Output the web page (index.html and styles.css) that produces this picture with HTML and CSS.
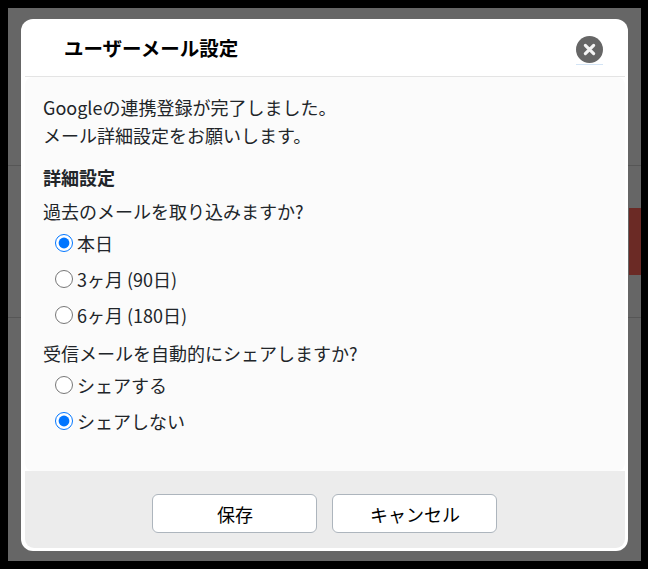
FILE: index.html
```html
<!DOCTYPE html>
<html lang="ja">
<head>
    <meta charset="UTF-8">
    <meta name="viewport" content="width=device-width, initial-scale=1.0">
    <title>ユーザーメール設定</title>
    <link rel="stylesheet" href="styles.css">
</head>
<body>
    <div class="page">
        <div class="bg-row bg-row-first"></div>
        <div class="bg-row bg-row-second">
            <div class="bg-alert"></div>
        </div>

        <div class="modal">
            <div class="modal-header">
                <h2>ユーザーメール設定</h2>
                <button type="button" class="close-btn" aria-label="閉じる">
                    <svg viewBox="0 0 26 26" xmlns="http://www.w3.org/2000/svg">
                        <circle cx="13" cy="13" r="13" />
                        <path d="M9 9l8 8M17 9l-8 8" />
                    </svg>
                </button>
            </div>
            <div class="modal-body">
                <p>Googleの連携登録が完了しました。<br>メール詳細設定をお願いします。</p>
                <h3>詳細設定</h3>
                <p class="question">過去のメールを取り込みますか?</p>
                <label class="radio-row"><input type="radio" name="period" checked>本日</label>
                <label class="radio-row"><input type="radio" name="period">3ヶ月 (90日)</label>
                <label class="radio-row"><input type="radio" name="period">6ヶ月 (180日)</label>
                <p class="question">受信メールを自動的にシェアしますか?</p>
                <label class="radio-row"><input type="radio" name="share">シェアする</label>
                <label class="radio-row"><input type="radio" name="share" checked>シェアしない</label>
            </div>
            <div class="modal-footer">
                <button type="button" class="btn">保存</button>
                <button type="button" class="btn">キャンセル</button>
            </div>
        </div>
    </div>
</body>
</html>
```

FILE: styles.css
```css
* {
    margin: 0;
    padding: 0;
    box-sizing: border-box;
}
html {
    background-color: #000;
}
body {
    margin: 8px 7px 8px 8px;
    font-family: "Noto Sans CJK JP", "Noto Sans", sans-serif;
    color: #212529;
}
.page {
    position: relative;
    height: 553px;
    background-color: #666;
    overflow: hidden;
}
.bg-row {
    border-bottom: 1px solid #565656;
}
.bg-row-first {
    height: 158px;
}
.bg-row-second {
    height: 152px;
    padding-top: 42px;
}
.bg-alert {
    width: 12px;
    height: 67px;
    margin-left: auto;
    background-color: #6b2a25;
}
.modal {
    position: absolute;
    top: 11px;
    left: 13px;
    width: 607px;
    height: 532px;
    display: flex;
    flex-direction: column;
    padding: 0 3px 3px 4px;
    background-color: #fff;
    border-radius: 12px;
}
.modal-header {
    display: flex;
    align-items: center;
    justify-content: space-between;
    height: 58px;
    padding: 0 22px 0 39px;
    border-bottom: 1px solid #e4e4e4;
}
.modal-header h2 {
    font-size: 19.5px;
    font-weight: 700;
    color: #000;
}
.close-btn {
    width: 27px;
    height: 29px;
    margin-top: 6px;
    padding-bottom: 1px;
    background: none;
    border: none;
    border-bottom: 1px solid #d3e4f5;
}
.close-btn svg {
    display: block;
    width: 27px;
    height: 27px;
    filter: blur(0.4px);
}
.close-btn circle {
    fill: #666;
}
.close-btn path {
    stroke: #f4f4f4;
    stroke-width: 3;
    stroke-linecap: round;
    fill: none;
}
.modal-body {
    flex: 1;
    padding: 16px 18px 0;
    font-size: 18px;
    line-height: 28px;
    background-color: #fbfbfb;
    border-radius: 8px;
}
.modal-body h3 {
    margin-top: 14px;
    font-size: 18px;
    font-weight: 700;
    line-height: 28px;
}
.question {
    margin-top: 6px;
}
.radio-row {
    display: flex;
    align-items: center;
    height: 36px;
    padding-left: 12px;
}
.radio-row input {
    width: 18px;
    height: 18px;
    margin: 0 4px 0 0;
}
.modal-footer {
    display: flex;
    justify-content: center;
    align-items: flex-start;
    gap: 15px;
    height: 77px;
    padding: 23px 2px 0 0;
    background-color: #ececec;
    border-radius: 0 0 9px 9px;
}
.btn {
    width: 165px;
    height: 39px;
    padding-left: 2px;
    font-family: inherit;
    font-size: 18px;
    color: #000;
    background-color: #fff;
    border: 1px solid #adb5bd;
    border-radius: 6px;
}
```
